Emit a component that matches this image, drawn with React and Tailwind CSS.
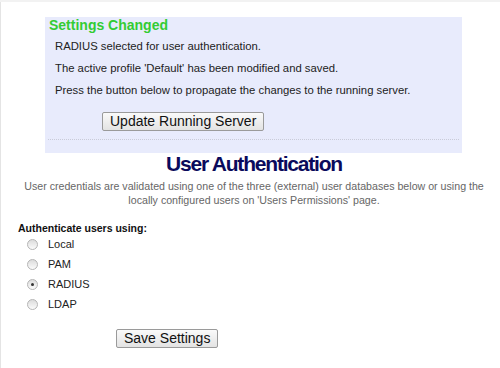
import React from "react";

function Radio({ checked }) {
  return (
    <span className="relative inline-block w-[11px] h-[11px] rounded-full border border-[#b5b5b5] bg-gradient-to-b from-[#dcdcdc] to-[#fbfbfb] shrink-0">
      {checked && (
        <span className="absolute left-[3px] top-[3px] w-[3px] h-[3px] rounded-full bg-[#333]" />
      )}
    </span>
  );
}

function Btn({ children, className = "" }) {
  return (
    <button
      className={
        "h-[19px] px-[7px] border border-[#9a9a9a] rounded-[2px] bg-gradient-to-b from-[#fafafa] to-[#e3e3e3] text-[14px] leading-[17px] text-[#111] " +
        className
      }
      style={{ fontFamily: '"Liberation Sans", Arial, sans-serif' }}
    >
      {children}
    </button>
  );
}

export default function App() {
  const options = [
    { label: "Local", checked: false },
    { label: "PAM", checked: false },
    { label: "RADIUS", checked: true },
    { label: "LDAP", checked: false },
  ];
  return (
    <div
      className="w-[500px] h-[368px] overflow-hidden bg-white border-t-2 border-[#f2f2f2]"
      style={{ fontFamily: '"Liberation Sans", Arial, sans-serif' }}
    >
      <div className="w-[507px] h-[366px] border-l border-[#e4e4e4] flex flex-col">
        <div className="ml-[44px] mt-[15px] w-[417px] h-[136px] bg-[#e8ebfc] flex flex-col">
          <div className="pl-[4px] text-[14px] leading-[16px] font-bold text-[#33cc33]">
            Settings Changed
          </div>
          <div className="mt-[2px] pl-[10px] text-[11.3px] leading-[22px] text-[#222]">
            <div>RADIUS selected for user authentication.</div>
            <div>The active profile 'Default' has been modified and saved.</div>
            <div>Press the button below to propagate the changes to the running server.</div>
          </div>
          <div className="mt-[11px] pl-[57px] flex">
            <Btn>Update Running Server</Btn>
          </div>
          <div className="mt-[8px] mx-[3px] border-t border-dotted border-[#c9cbd9]" />
        </div>
        <h1 className="text-center text-[21px] leading-[22px] font-bold tracking-[-1.2px] text-[#0a0a5c]">
          User Authentication
        </h1>
        <p className="mt-[4px] text-center text-[10.65px] leading-[14px] text-[#666]">
          User credentials are validated using one of the three (external) user databases below or using the
          <br />
          locally configured users on 'Users Permissions' page.
        </p>
        <div className="mt-[15px] pl-[17px] text-[10.5px] leading-[12px] font-bold text-[#111]">
          Authenticate users using:
        </div>
        <div className="flex flex-col">
          {options.map((o) => (
            <div key={o.label} className="h-[20px] pl-[26px] flex items-center gap-[10px]">
              <Radio checked={o.checked} />
              <span className="text-[11px] text-[#222]">{o.label}</span>
            </div>
          ))}
        </div>
        <div className="mt-[15px] pl-[115px] flex">
          <Btn>Save Settings</Btn>
        </div>
      </div>
    </div>
  );
}
